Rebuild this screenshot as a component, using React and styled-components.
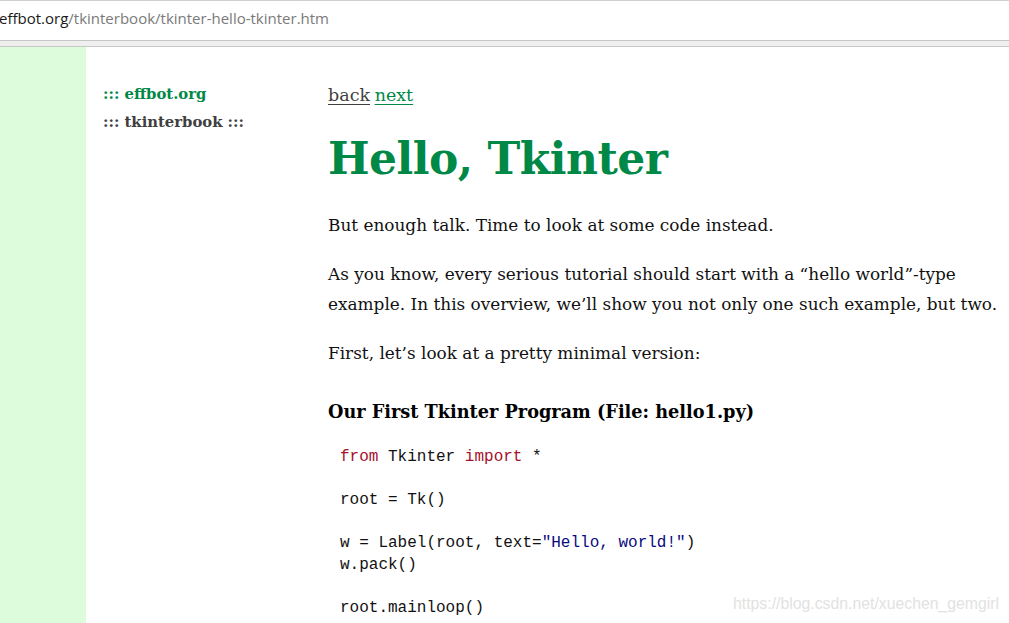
import React from 'react'
import styled, { createGlobalStyle } from 'styled-components'

const GlobalStyle = createGlobalStyle`
  html, body {
    margin: 0;
    padding: 0;
    background: #fff;
    overflow: hidden;
  }
`

const Page = styled.div`
  width: 1009px;
  height: 623px;
  display: flex;
  flex-direction: column;
  position: relative;
  overflow: hidden;
`

const AddressBar = styled.div`
  height: 41px;
  box-sizing: border-box;
  border-top: 1px solid #cfcfcf;
  border-bottom: 1px solid #c6c6c6;
  display: flex;
  align-items: center;
  padding-bottom: 5px;
  font-family: "Open Sans", "Noto Sans", sans-serif;
  font-size: 15px;
  color: #7a7a7a;
  white-space: nowrap;
`

const Host = styled.span`
  color: #1a1a1a;
  margin-left: -1px;
`

const Strip = styled.div`
  height: 5px;
  background: #efefef;
  border-bottom: 1px solid #c8c8c8;
`

const Body = styled.div`
  flex: 1;
  display: flex;
  font-family: "DejaVu Serif", Georgia, serif;
`

const Gutter = styled.div`
  width: 86px;
  background: #dcfcdc;
  flex-shrink: 0;
`

const Nav = styled.div`
  width: 225px;
  padding: 33px 0 0 17px;
  flex-shrink: 0;
  font-size: 14.8px;
  font-weight: bold;
  line-height: 28px;
`

const NavItem = styled.div`
  color: ${({ $green }) => ($green ? '#008847' : '#3f3f3f')};
`

const Main = styled.div`
  flex: 1;
  padding-top: 35px;
  color: #111;
  font-size: 16.9px;
`

const Links = styled.div`
  font-size: 17.5px;
  line-height: 26px;
  word-spacing: -1px;
`

const Link = styled.a`
  color: ${({ $green }) => ($green ? '#008847' : '#3f3f3f')};
  text-decoration: underline;
  text-underline-offset: 3px;
  word-spacing: normal;
`

const Title = styled.h1`
  margin: 19px 0 0;
  font-size: 44px;
  line-height: 64px;
  color: #008847;
  font-weight: bold;
  letter-spacing: -0.5px;
`

const Para = styled.p`
  margin: 19px 0 0;
  line-height: 30px;
`

const SubTitle = styled.h3`
  margin: 29px 0 0;
  font-size: 17.7px;
  line-height: 30px;
  font-weight: bold;
  color: #000;
`

const Code = styled.pre`
  margin: 20px 0 0 12px;
  font-family: "Liberation Mono", "DejaVu Sans Mono", monospace;
  font-size: 16px;
  line-height: 21.6px;
  color: #111;
`

const Kw = styled.span`
  color: #a4112a;
`

const Str = styled.span`
  color: #0a0a80;
`

const Watermark = styled.div`
  position: absolute;
  left: 733px;
  top: 595px;
  font-family: "Liberation Sans", Arial, sans-serif;
  font-size: 15.8px;
  color: #e2e2e2;
`

export default function App() {
  return (
    <Page>
      <GlobalStyle />
      <AddressBar>
        <Host>effbot.org</Host>/tkinterbook/tkinter-hello-tkinter.htm
      </AddressBar>
      <Strip />
      <Body>
        <Gutter />
        <Nav>
          <NavItem $green>::: effbot.org</NavItem>
          <NavItem>::: tkinterbook :::</NavItem>
        </Nav>
        <Main>
          <Links>
            <Link href="#">back</Link>{' '}
            <Link href="#" $green>next</Link>
          </Links>
          <Title>Hello, Tkinter</Title>
          <Para>But enough talk. Time to look at some code instead.</Para>
          <Para>
            As you know, every serious tutorial should start with a “hello world”-type
            <br />
            example. In this overview, we’ll show you not only one such example, but two.
          </Para>
          <Para>First, let’s look at a pretty minimal version:</Para>
          <SubTitle>Our First Tkinter Program (File: hello1.py)</SubTitle>
          <Code>
            <Kw>from</Kw> Tkinter <Kw>import</Kw> *{'\n\n'}
            root = Tk(){'\n\n'}
            w = Label(root, text=<Str>"Hello, world!"</Str>){'\n'}
            w.pack(){'\n\n'}
            root.mainloop()
          </Code>
        </Main>
      </Body>
      <Watermark>https://blog.csdn.net/xuechen_gemgirl</Watermark>
    </Page>
  )
}
